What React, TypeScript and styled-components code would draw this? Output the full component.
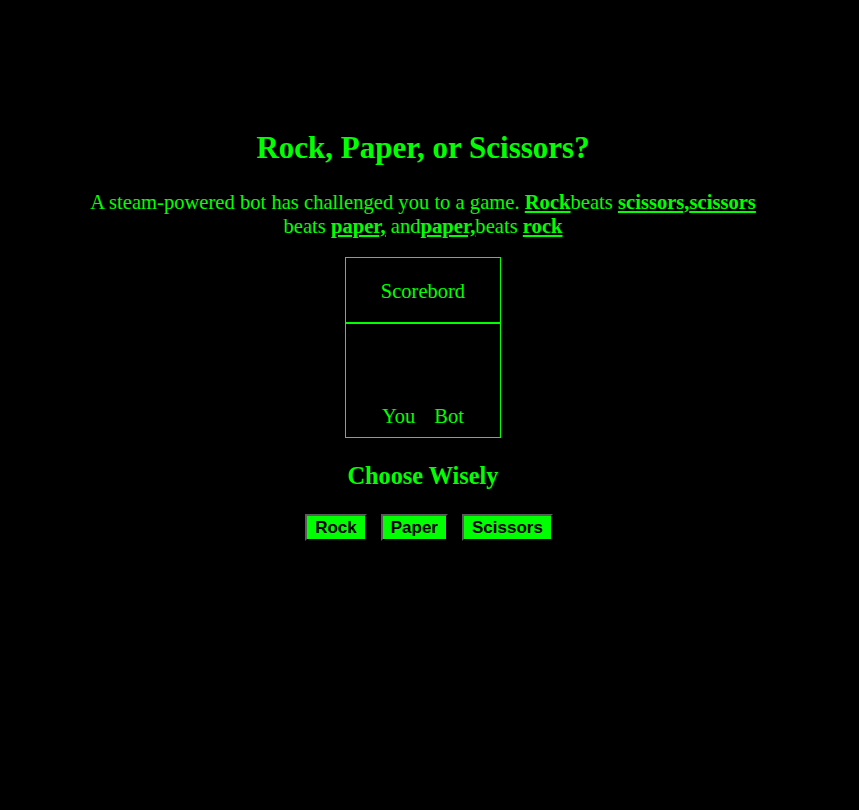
import React from "react";
import styled, { createGlobalStyle } from "styled-components";

const GREEN = "#00ff00";

const Global = createGlobalStyle`
  html, body { background: #000; }
  body { margin: 8px; font-family: "Liberation Serif", "Times New Roman", serif; color: ${GREEN}; }
`;

const Page = styled.main`
  width: 830px;
  padding-top: 100px;
  display: flex;
  flex-direction: column;
  align-items: center;
  text-align: center;
`;

const Title = styled.h1`
  font-size: 31px;
  font-weight: bold;
  margin: 21px 0 0;
  line-height: 37px;
`;

const Intro = styled.p`
  font-size: 20.6px;
  line-height: 24px;
  margin: 24px 0 0;
  max-width: 700px;
`;

const Term = styled.b`
  text-decoration: underline;
`;

const Board = styled.div`
  margin-top: 19px;
  width: 154px;
  border: 1px solid ${GREEN};
  display: flex;
  flex-direction: column;
`;

const BoardHead = styled.div`
  height: 66px;
  border-bottom: 2px solid ${GREEN};
  display: flex;
  align-items: center;
  justify-content: center;
  font-size: 20.5px;
  padding-top: 2px;
  box-sizing: border-box;
`;

const BoardBody = styled.div`
  height: 113px;
  display: flex;
  align-items: flex-end;
  justify-content: center;
  gap: 19px;
  font-size: 20.5px;
  line-height: 23px;
  padding-bottom: 9px;
  box-sizing: border-box;
`;

const Sub = styled.h2`
  font-size: 24.3px;
  font-weight: bold;
  line-height: 28px;
  margin: 24px 0 0;
`;

const Buttons = styled.div`
  margin-top: 24px;
  display: flex;
  gap: 14px;
  padding-left: 12px;
`;

const Btn = styled.button`
  height: 27px;
  padding: 0 8px;
  background: ${GREEN};
  color: #000;
  font-family: "Liberation Sans", Arial, sans-serif;
  font-weight: bold;
  font-size: 17px;
  border-style: solid;
  border-width: 2px;
  border-color: #5a5a5a #000 #000 #5a5a5a;
  cursor: pointer;
`;

export default function App() {
  return (
    <>
      <Global />
      <Page>
        <Title>Rock, Paper, or Scissors?</Title>
        <Intro>
          A steam-powered bot has challenged you to a game. <Term>Rock</Term>beats{" "}
          <Term>scissors,</Term>
          <Term>scissors</Term> beats <Term>paper,</Term> and<Term>paper,</Term>beats{" "}
          <Term>rock</Term>
        </Intro>
        <Board>
          <BoardHead>Scorebord</BoardHead>
          <BoardBody>
            <span>You</span>
            <span>Bot</span>
          </BoardBody>
        </Board>
        <Sub>Choose Wisely</Sub>
        <Buttons>
          <Btn>Rock</Btn>
          <Btn>Paper</Btn>
          <Btn>Scissors</Btn>
        </Buttons>
      </Page>
    </>
  );
}
